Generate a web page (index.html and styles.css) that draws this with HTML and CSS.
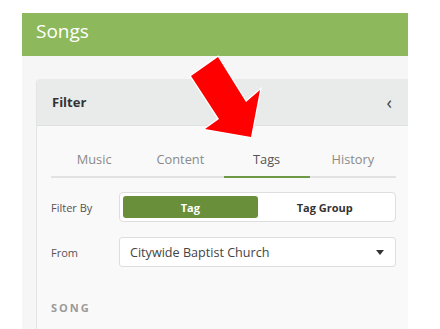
FILE: index.html
```html
<!DOCTYPE html>
<html>

<head lang="en">
    <meta charset="utf-8" />
    <meta name="viewport" content="width=device-width, initial-scale=1" />
    <title>Songs</title>
    <link rel="stylesheet" href="styles.css">
</head>

<body>
    <div class="page">
        <header class="page-head">Songs</header>

        <div class="content">
            <div class="card">
                <div class="card-head">
                    <span class="card-title">Filter</span>
                    <span class="chevron">&lsaquo;</span>
                </div>

                <div class="card-body">
                    <ul class="tabs">
                        <li>Music</li>
                        <li>Content</li>
                        <li class="active">Tags</li>
                        <li>History</li>
                    </ul>

                    <div class="row row-first">
                        <label class="row-label">Filter By</label>
                        <div class="toggle">
                            <button class="toggle-btn on">Tag</button>
                            <button class="toggle-btn">Tag Group</button>
                        </div>
                    </div>

                    <div class="row">
                        <label class="row-label">From</label>
                        <div class="select">
                            <span>Citywide Baptist Church</span>
                            <span class="caret"></span>
                        </div>
                    </div>

                    <h4 class="section">SONG</h4>
                </div>
            </div>
        </div>
    </div>

    <!-- callout arrow pointing at the Tags tab -->
    <svg class="arrow" width="90" height="95" viewBox="0 0 90 95">
        <polygon points="11,26 38,7 66,52 80,40 71,87 25,79 39,69" />
    </svg>
</body>

</html>
```

FILE: styles.css
```css
body {
    margin: 0;
    background-color: #fff;
    font-family: "Open Sans", "Noto Sans", sans-serif;
    overflow: hidden;
}

.page {
    margin: 13px 0 0 22px;
    width: 386px;
}

.page-head {
    height: 43px;
    line-height: 36px;
    padding-left: 14px;
    background-color: #8db85b;
    color: #fff;
    font-size: 19px;
}

.content {
    background-color: #f6f6f6;
    padding: 23px 0 0 14px;
    height: 260px;
}

.card {
    background-color: #f9f9f9;
    border-left: 1px solid #e4e4e4;
    border-top-left-radius: 4px;
    height: 100%;
}

.card-head {
    height: 46px;
    display: flex;
    align-items: center;
    justify-content: space-between;
    padding: 0 16px 0 15px;
    background-color: #e9eaea;
    border-bottom: 1px solid #e0e0e0;
    border-top-left-radius: 4px;
}

.card-title {
    font-size: 13px;
    font-weight: bold;
    color: #333;
}

.chevron {
    font-size: 18px;
    color: #444;
    line-height: 1;
    margin-top: -1px;
}

.card-body {
    padding: 0 12px 0 14px;
}

.tabs {
    display: flex;
    list-style: none;
    margin: 0;
    padding: 22px 0 0 0;
    border-bottom: 2px solid #e2e2e2;
}

.tabs li {
    flex: 1;
    text-align: center;
    font-size: 12.8px;
    line-height: 22px;
    padding-bottom: 6px;
    margin-bottom: -2px;
    color: #8a8a8a;
    border-bottom: 2px solid transparent;
}

.tabs li.active {
    color: #555;
    border-bottom-color: #6e9a45;
}

.row {
    display: flex;
    align-items: center;
    margin-top: 15px;
}

.row-first {
    margin-top: 14px;
}

.row-label {
    width: 68px;
    font-size: 11px;
    color: #555;
}

.toggle {
    flex: 1;
    display: flex;
    padding: 3px;
    height: 22px;
    background-color: #fff;
    border: 1px solid #dedede;
    border-radius: 4px;
}

.toggle-btn {
    flex: 1;
    border: none;
    border-radius: 3px;
    background: none;
    font-family: inherit;
    font-size: 11px;
    font-weight: bold;
    color: #333;
    padding: 0;
}

.toggle-btn.on {
    background-color: #6a8f3a;
    color: #fff;
}

.select {
    flex: 1;
    height: 28px;
    display: flex;
    align-items: center;
    justify-content: space-between;
    padding: 0 11px 0 10px;
    background-color: #fff;
    border: 1px solid #dedede;
    border-radius: 3px;
    font-size: 12.6px;
    color: #444;
}

.caret {
    width: 0;
    height: 0;
    border-left: 4px solid transparent;
    border-right: 4px solid transparent;
    border-top: 5px solid #333;
}

.section {
    margin: 33px 0 0 0;
    font-size: 11px;
    font-weight: bold;
    letter-spacing: 2px;
    color: #999;
}

.arrow {
    position: absolute;
    left: 180px;
    top: 50px;
    pointer-events: none;
}

.arrow polygon {
    fill: #ff0000;
    stroke: #fff;
    stroke-width: 2.5;
    stroke-linejoin: miter;
    paint-order: stroke;
}
```
